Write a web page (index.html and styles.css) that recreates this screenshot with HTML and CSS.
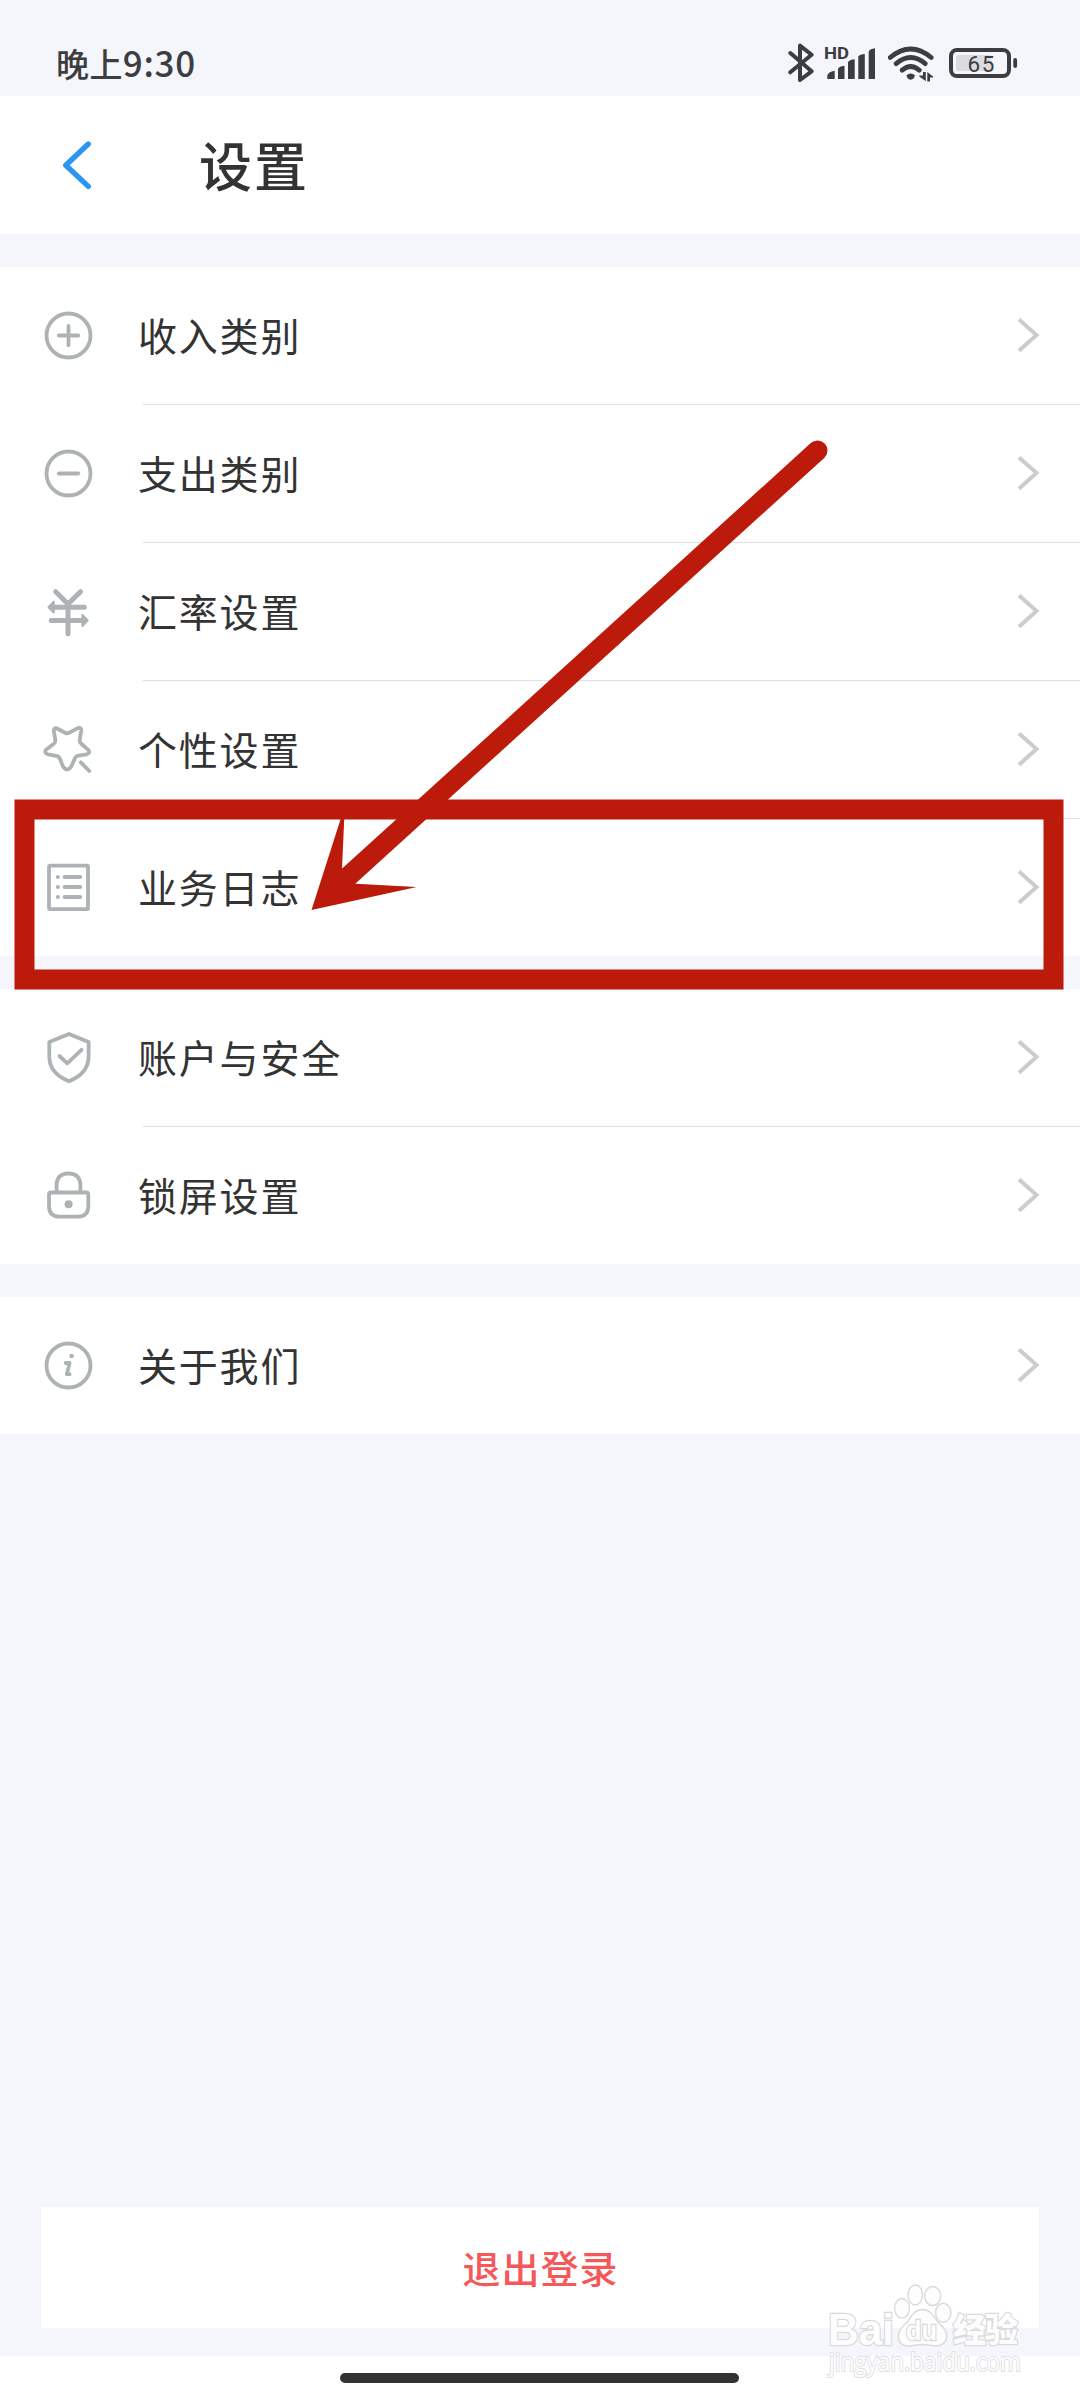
FILE: index.html
```html
<!DOCTYPE html>
<html lang="zh-CN">
<head>
    <meta charset="UTF-8">
    <meta name="viewport" content="width=device-width, initial-scale=1.0">
    <title>设置</title>
    <link rel="stylesheet" href="styles.css">
</head>
<body>
    <div class="screen">
        <div class="status-bar">
            <span class="time">晚上<span class="digits">9:30</span></span>
            <div class="status-icons">
                <svg class="bluetooth" width="26" height="40" viewBox="0 0 26 40">
                    <path d="M2.3 11L23.6 29.3L12 38V3.6L23.6 12.7L2.3 30.3"/>
                </svg>
                <svg class="signal" width="52" height="40" viewBox="0 0 52 40">
                    <text x="0" y="17.2" textLength="25" lengthAdjust="spacingAndGlyphs">HD</text>
                    <path d="M3.3 33.5Q4 30 10.7 28.7V37H3.3zM14 26.5Q16 24 20.5 23.7V37H14zM24 20Q26 17.6 30.7 17.3V37H24zM34.3 14.5Q36 12.3 40.8 12V37H34.3zM44.7 9.5Q46 6.8 51 6.3V37H44.7z"/>
                </svg>
                <svg class="wifi" width="46" height="40" viewBox="0 0 46 40">
                    <path class="arc" d="M2.2 15.5Q22.7 -1.5 43.2 15.5M8.2 21.6Q22.7 9.4 37.2 21.6M14.2 28.2Q22.7 21 31.2 28.2"/>
                    <path d="M18.4 33.2Q22.7 29.8 27 33.2L26 36Q22.7 39.5 19.4 36zM35 30h2.8v9.2L31.3 34.6V33.6H35zM39.3 39.4V30L45 34.4V35.4H42V39.4z"/>
                </svg>
                <svg class="battery" width="69" height="40" viewBox="0 0 69 40">
                    <rect class="charge" x="7" y="13" width="35" height="16" rx="2"/>
                    <rect class="case" x="2" y="8" width="58" height="26" rx="6"/>
                    <rect x="64.3" y="16" width="3.8" height="10" rx="1.9"/>
                    <text x="18.5" y="29.6" textLength="27">65</text>
                </svg>
            </div>
        </div>

        <header class="header">
            <svg class="back" width="30" height="50" viewBox="0 0 30 50">
                <path d="M26.3 4L3.8 25.3L26.3 46.4"/>
            </svg>
            <h1>设置</h1>
        </header>

        <div class="group">
            <div class="item">
                <svg class="icon" viewBox="0 0 55 55">
                    <circle cx="27.5" cy="27.5" r="22"/>
                    <path d="M17.8 27.5H37.2M27.5 17.8V37.2"/>
                </svg>
                <span class="label">收入类别</span>
                <svg class="chevron" viewBox="0 0 24 37"><path d="M3 2.5L20.5 18L3 33.8"/></svg>
            </div>
            <div class="item">
                <svg class="icon" viewBox="0 0 55 55">
                    <circle cx="27.5" cy="27.5" r="22"/>
                    <path d="M17.8 27.5H37.2"/>
                </svg>
                <span class="label">支出类别</span>
                <svg class="chevron" viewBox="0 0 24 37"><path d="M3 2.5L20.5 18L3 33.8"/></svg>
            </div>
            <div class="item">
                <svg class="icon" viewBox="0 0 55 55">
                    <path class="bold" d="M14.7 7.7L27 20L39.5 7.7M27 20V49.7M12 23.2H43.3M10.3 36.5H42"/>
                    <path class="solid" d="M7.5 23.2L12.8 17.8V28.6zM46.7 36.5L41.4 31V42z"/>
                </svg>
                <span class="label">汇率设置</span>
                <svg class="chevron" viewBox="0 0 24 37"><path d="M3 2.5L20.5 18L3 33.8"/></svg>
            </div>
            <div class="item">
                <svg class="icon" viewBox="0 0 55 55">
                    <path d="M17 7L23.5 10.5Q26 12 28.5 10.5L36 6.6Q40.8 4.4 40.2 9L38.8 17Q38.2 20 40.5 22L47 27.6Q50.2 31 45.5 32.3L37.5 33.7Q35 34 33.8 36.5L30.5 44Q26 51 21.8 44L18.8 36.5Q17.7 34 15.2 33.8L7 32.3Q2.4 31 5.3 27.6L12.6 22Q14.7 20.3 14.3 17.5L12.8 9Q12.6 4.8 17 7z"/>
                    <path d="M39.8 40.3L48.3 49"/>
                </svg>
                <span class="label">个性设置</span>
                <svg class="chevron" viewBox="0 0 24 37"><path d="M3 2.5L20.5 18L3 33.8"/></svg>
            </div>
            <div class="item">
                <svg class="icon" viewBox="0 0 55 55">
                    <rect x="8" y="5.7" width="39" height="43.5" rx="1"/>
                    <path class="line" d="M23.6 16.9H39.2M23.6 27H39.2M23.6 37H39.2M16.8 16.9h.1M16.8 27h.1M16.8 37h.1"/>
                </svg>
                <span class="label">业务日志</span>
                <svg class="chevron" viewBox="0 0 24 37"><path d="M3 2.5L20.5 18L3 33.8"/></svg>
            </div>
        </div>

        <div class="group">
            <div class="item">
                <svg class="icon" viewBox="0 0 55 55">
                    <path d="M28 4L47.6 12V26.5Q47.5 43.5 28 51.2Q8.3 43.5 8.3 26.5V12z"/>
                    <path d="M18.5 26L26.3 33.3L40.5 19.8"/>
                </svg>
                <span class="label">账户与安全</span>
                <svg class="chevron" viewBox="0 0 24 37"><path d="M3 2.5L20.5 18L3 33.8"/></svg>
            </div>
            <div class="item">
                <svg class="icon" viewBox="0 0 55 55">
                    <path d="M15.6 24V16.8Q16 5.8 27.5 5.4Q39 5.8 39.4 16.8V24M10 24.5H45.2Q47.3 24.5 47.3 26.5V38Q47.3 48.7 36.5 48.7H19Q8 48.7 8 38V26.5Q8 24.5 10 24.5z"/>
                    <circle class="dot" cx="27.6" cy="36.2" r="4"/>
                </svg>
                <span class="label">锁屏设置</span>
                <svg class="chevron" viewBox="0 0 24 37"><path d="M3 2.5L20.5 18L3 33.8"/></svg>
            </div>
        </div>

        <div class="group">
            <div class="item">
                <svg class="icon" viewBox="0 0 55 55">
                    <circle cx="27.5" cy="27.5" r="22"/>
                    <circle class="dot" cx="30.6" cy="18" r="2.3"/>
                    <path d="M24.6 25H28.6L25.8 36.2H28.6"/>
                </svg>
                <span class="label">关于我们</span>
                <svg class="chevron" viewBox="0 0 24 37"><path d="M3 2.5L20.5 18L3 33.8"/></svg>
            </div>
        </div>

        <button class="logout" type="button">退出登录</button>

        <div class="nav-bar">
            <div class="home-indicator"></div>
        </div>

        <!-- highlight box and arrow -->
        <svg class="annotation" width="1080" height="2400" viewBox="0 0 1080 2400">
            <rect x="24.5" y="809.5" width="1029" height="170"/>
            <path class="shaft" d="M817.5 450.5L340 884"/>
            <path class="head" d="M311.5 910L344.8 806L342 869L355.7 883.7L416.7 887z"/>
        </svg>

        <!-- watermark -->
        <svg class="watermark" width="210" height="120" viewBox="820 2280 210 120">
            <text class="bai" x="828" y="2344.5" textLength="66" lengthAdjust="spacingAndGlyphs">Bai</text>
            <ellipse cx="902" cy="2308.3" rx="7.5" ry="9.8"/>
            <ellipse cx="915.3" cy="2295" rx="7.3" ry="10"/>
            <ellipse cx="932.7" cy="2296" rx="8" ry="9.5"/>
            <ellipse cx="943.2" cy="2312.7" rx="7.7" ry="9.5"/>
            <path d="M922.5 2309.5C930 2309.5 933 2315 937 2321C941 2326 946.7 2329 946.7 2336C946.7 2343 941 2346 936 2346C931 2346 928 2344.5 922.5 2344.5C917 2344.5 914 2346 909 2346C903 2346 898.3 2343 898.3 2336C898.3 2329 904 2326 908 2321C912 2315 915 2309.5 922.5 2309.5z"/>
            <text class="du" x="906" y="2340" textLength="31" lengthAdjust="spacingAndGlyphs">du</text>
            <text class="jingyan" x="953" y="2341.5" textLength="65">经验</text>
            <text class="url" x="829" y="2370.5" textLength="192" lengthAdjust="spacingAndGlyphs">jingyan.baidu.com</text>
        </svg>
    </div>
</body>
</html>
```
FILE: styles.css
```css
* {
    box-sizing: border-box;
}
body {
    margin: 0;
    background-color: #f5f6fb;
    font-family: "Noto Sans CJK SC", "Noto Sans", sans-serif;
    color: #333;
}
svg {
    display: block;
    flex: none;
}
.screen {
    position: relative;
    display: flex;
    flex-direction: column;
    width: 1080px;
    height: 2400px;
    overflow: hidden;
}

/* status bar */
.status-bar {
    display: flex;
    justify-content: space-between;
    height: 96px;
    padding: 41px 62px 0 56px;
    color: #3c3d40;
}
.time {
    font-size: 33px;
    font-weight: 500;
    line-height: 42px;
    letter-spacing: 0.4px;
}
.digits {
    font-size: 35px;
    letter-spacing: 0.7px;
}
.status-icons {
    display: flex;
    margin-top: 1px;
    fill: #3c3d40;
}
.status-icons text {
    font-family: Roboto, sans-serif;
    font-weight: 500;
}
.bluetooth {
    fill: none;
    stroke: #3c3d40;
    stroke-width: 4;
    stroke-linecap: round;
    stroke-linejoin: round;
}
.signal {
    margin-left: 10px;
}
.status-icons .signal text {
    font-size: 17px;
    font-weight: 700;
}
.wifi {
    margin-left: 12px;
}
.wifi .arc {
    fill: none;
    stroke: #3c3d40;
    stroke-width: 4.8;
    stroke-linecap: round;
}
.battery {
    margin-left: 15px;
}
.battery .charge {
    fill: #dbdce0;
}
.battery .case {
    fill: none;
    stroke: #3c3d40;
    stroke-width: 4;
}
.battery text {
    font-size: 22.5px;
    font-weight: 400;
}

/* header */
.header {
    display: flex;
    align-items: center;
    height: 138px;
    margin-bottom: 33px;
    padding-left: 62px;
    background-color: #fff;
}
.back {
    fill: none;
    stroke: #2b96f1;
    stroke-width: 5.4;
    stroke-linecap: round;
    stroke-linejoin: round;
}
.header h1 {
    margin: 0 0 2px 107px;
    font-size: 53px;
    font-weight: 500;
    line-height: 76px;
    letter-spacing: 2px;
}

/* settings list */
.group {
    margin-bottom: 33px;
    background-color: #fff;
}
.item {
    display: flex;
    align-items: center;
    height: 137px;
    padding: 0 40px 0 41px;
}
.item + .item {
    height: 138px;
    border-top: 1px solid transparent;
    background: linear-gradient(#e0e0e0, #e0e0e0) 143px 0 / 937px 1px no-repeat border-box;
}
.icon {
    width: 55px;
    height: 55px;
    fill: none;
    stroke: #adb2b5;
    stroke-width: 3.8;
    stroke-linecap: round;
    stroke-linejoin: round;
}
.icon .bold {
    stroke-width: 5;
}
.icon .line {
    stroke-width: 4;
}
.icon .solid {
    fill: #adb2b5;
    stroke-width: 2;
}
.icon .dot {
    fill: #adb2b5;
    stroke: none;
}
.label {
    flex: 1;
    margin: 0 0 4px 42px;
    font-size: 39px;
    line-height: 56px;
    letter-spacing: 1.8px;
}
.chevron {
    width: 24px;
    height: 37px;
    fill: none;
    stroke: #ccc;
    stroke-width: 4;
}

/* bottom */
.logout {
    height: 121px;
    margin: auto 41px 28px;
    padding: 0 0 3px 1px;
    border: none;
    background-color: #fff;
    color: #f65859;
    font-family: inherit;
    font-size: 38px;
    font-weight: 500;
    letter-spacing: 1px;
}
.nav-bar {
    display: flex;
    justify-content: center;
    height: 44px;
    padding: 17px 1px 0 0;
    background-color: #fff;
}
.home-indicator {
    width: 399px;
    height: 10px;
    border-radius: 5px;
    background-color: #333;
}

/* overlays */
.annotation {
    position: absolute;
    top: 0;
    left: 0;
    fill: none;
    stroke: #bc1a0b;
    stroke-width: 20;
}
.annotation .shaft {
    stroke-linecap: round;
}
.annotation .head {
    fill: #bc1a0b;
    stroke: none;
}
.watermark {
    position: absolute;
    left: 820px;
    top: 2280px;
    fill: #fdfdfe;
    stroke: #d9dadc;
    stroke-width: 1.4;
}
.watermark text {
    paint-order: stroke;
    stroke-width: 2.4;
}
.watermark .bai {
    font-family: "Liberation Sans", sans-serif;
    font-size: 45px;
    font-weight: 700;
}
.watermark .du {
    font-family: "Liberation Sans", sans-serif;
    font-size: 27px;
    font-weight: 700;
}
.watermark .jingyan {
    font-size: 33px;
    font-weight: 900;
}
.watermark .url {
    font-family: "Open Sans", sans-serif;
    font-size: 25px;
    stroke: #e0e1e3;
    stroke-width: 2;
}
```
